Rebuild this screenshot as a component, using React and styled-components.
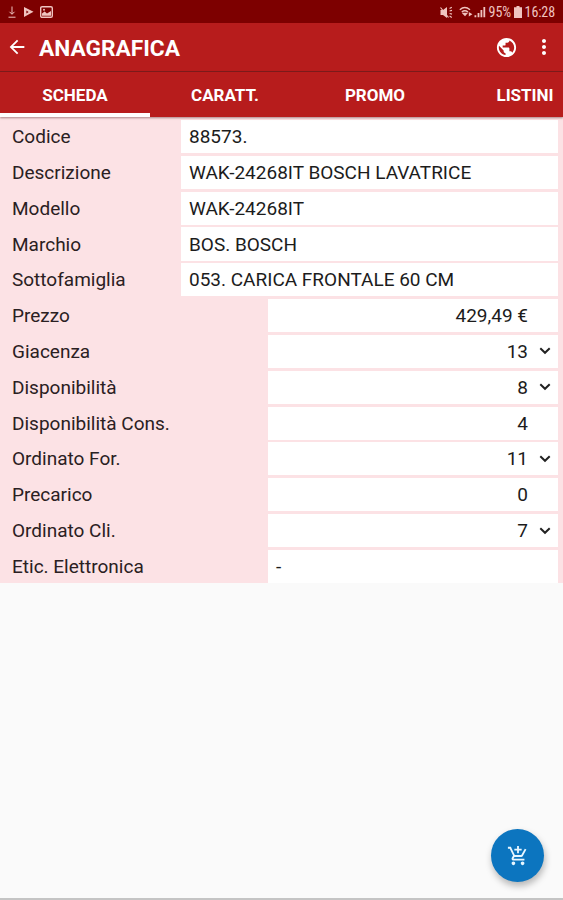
import { useState } from "react";
import styled, { createGlobalStyle } from "styled-components";
import {
  MdAddShoppingCart,
  MdArrowBack,
  MdMoreVert,
  MdPublic,
} from "react-icons/md";

const TABS = ["SCHEDA", "CARATT.", "PROMO", "LISTINI"];

const DETAILS = [
  { label: "Codice", value: "88573." },
  { label: "Descrizione", value: "WAK-24268IT BOSCH LAVATRICE" },
  { label: "Modello", value: "WAK-24268IT" },
  { label: "Marchio", value: "BOS. BOSCH" },
  { label: "Sottofamiglia", value: "053. CARICA FRONTALE 60 CM" },
];

const STOCK = [
  { label: "Prezzo", value: "429,49 €" },
  { label: "Giacenza", value: "13", more: true },
  { label: "Disponibilità", value: "8", more: true },
  { label: "Disponibilità Cons.", value: "4" },
  { label: "Ordinato For.", value: "11", more: true },
  { label: "Precarico", value: "0" },
  { label: "Ordinato Cli.", value: "7", more: true },
  { label: "Etic. Elettronica", value: "-", left: true },
];

function StatusIcons() {
  return (
    <StatusGroup>
      <svg width="10" height="13" viewBox="0 0 10 13" fill="none" stroke="currentColor">
        <path d="M5 0.5V8M2.5 5.8L5 8.3L7.5 5.8M1.5 11.2H8.5" />
      </svg>
      <svg width="11" height="12" viewBox="0 0 11 12" fill="currentColor">
        <path d="M1 1L10.5 5.8L1 11Z" />
        <path d="M3.4 4.6L5.6 6L3.4 7.4Z" fill="#7d0000" />
      </svg>
      <svg width="13" height="12" viewBox="0 0 13 12" fill="currentColor">
        <rect x="0.7" y="0.7" width="11.6" height="10.6" rx="1.4" fill="none" stroke="currentColor" strokeWidth="1.4" />
        <path d="M2 9.8V7.6L4.6 5.6L7 7.5L11 5V9.8Z" />
        <circle cx="4" cy="3.7" r="1" />
      </svg>
    </StatusGroup>
  );
}

function SignalIcons() {
  return (
    <>
      <svg width="14" height="13" viewBox="0 0 14 13" fill="currentColor">
        <path d="M0.5 4H3L7 1V12L3 9H0.5Z" />
        <path d="M0.5 1.5L8.5 11.5M9.6 2.5L11.8 1.2M9.6 5L12 4.4M9.6 7.5L12 8.2M9.6 10L11.8 11.4" stroke="currentColor" strokeWidth="1.2" />
      </svg>
      <svg className="wifi" width="14" height="12" viewBox="0 0 14 12" fill="none" stroke="currentColor" strokeWidth="1.4">
        <path d="M0.8 3.8Q5.8 -0.6 11 3.8M2.8 6Q5.8 3.4 9 6" />
        <path d="M4.3 7.4L6 9.2L7.6 7.4Z" fill="currentColor" />
        <path d="M9.8 6V10.6L13.4 8.3Z" fill="currentColor" stroke="none" />
      </svg>
      <svg width="12" height="12" viewBox="0 0 12 12" fill="currentColor">
        <path d="M0.5 9.2H2.3V11.2H0.5ZM3.6 7H5.4V11.2H3.6ZM6.5 4H8.3V11.2H6.5ZM9.4 1H11.2V11.2H9.4Z" />
      </svg>
    </>
  );
}

function App() {
  const [activeTab, setActiveTab] = useState("SCHEDA");

  return (
    <Page>
      <GlobalStyle />
      <StatusBar>
        <StatusIcons />
        <StatusInfo>
          <SignalIcons />
          <StatusText $width={24}>95%</StatusText>
          <Battery width="8" height="12" viewBox="0 0 8 12" fill="currentColor">
            <path d="M2.5 0H5.5V1.2H8V12H0V1.2H2.5Z" />
          </Battery>
          <StatusText>16:28</StatusText>
        </StatusInfo>
      </StatusBar>

      <AppBar>
        <IconButton aria-label="Indietro">
          <MdArrowBack size={22} />
        </IconButton>
        <Title>ANAGRAFICA</Title>
        <IconButton aria-label="Web">
          <MdPublic size={23} />
        </IconButton>
        <IconButton aria-label="Menu" $gap={14}>
          <MdMoreVert size={24} />
        </IconButton>
      </AppBar>

      <Tabs>
        {TABS.map((tab) => (
          <Tab
            key={tab}
            $active={tab === activeTab}
            onClick={() => setActiveTab(tab)}
          >
            {tab}
          </Tab>
        ))}
      </Tabs>

      <Sheet>
        {DETAILS.map(({ label, value }) => (
          <Row key={label} $label={181}>
            <Label>{label}</Label>
            <Value>{value}</Value>
          </Row>
        ))}
        {STOCK.map(({ label, value, more, left }) => (
          <Row key={label} $label={268}>
            <Label>{label}</Label>
            <Value $right={!left}>
              {value}
              {more && (
                <Chevron width="12" height="8" viewBox="0 0 12 8">
                  <path d="M1.3 1.3L6 5.8L10.7 1.3" />
                </Chevron>
              )}
            </Value>
          </Row>
        ))}
      </Sheet>

      <Footer>
        <CartButton aria-label="Aggiungi al carrello">
          <MdAddShoppingCart size={22} />
        </CartButton>
      </Footer>
    </Page>
  );
}

const GlobalStyle = createGlobalStyle`
  * {
    box-sizing: border-box;
  }
  body {
    margin: 0;
    font-family: Roboto, "Liberation Sans", sans-serif;
  }
  button {
    font-family: inherit;
    border: none;
    background: none;
    padding: 0;
    color: inherit;
  }
  svg {
    display: block;
    flex-shrink: 0;
  }
`;

const Page = styled.div`
  display: flex;
  flex-direction: column;
  width: 563px;
  height: 900px;
  overflow: hidden;
  background: #fafafa;
  border-bottom: 2px solid #c4c4c4;
`;

const StatusBar = styled.div`
  display: flex;
  align-items: center;
  justify-content: space-between;
  flex-shrink: 0;
  height: 23px;
  padding: 1px 8px 0 7px;
  background: #7d0000;
  color: #f0c4c0;
`;

const StatusGroup = styled.div`
  display: flex;
  align-items: center;
  gap: 6px;
`;

const StatusInfo = styled.div`
  display: flex;
  align-items: center;
  font-size: 14px;
  .wifi {
    margin: 0 1px 0 5px;
  }
`;

const StatusText = styled.span`
  width: ${({ $width }) => ($width ? `${$width}px` : "auto")};
  margin-left: 3px;
  line-height: 20px;
  font-stretch: 75%;
  letter-spacing: -0.1px;
  white-space: nowrap;
`;

const Battery = styled.svg`
  margin-left: 1px;
`;

const AppBar = styled.header`
  display: flex;
  align-items: center;
  flex-shrink: 0;
  height: 49px;
  padding: 0 7px 0 6px;
  background: #b71c1c;
  color: #fff;
  border-bottom: 1px solid #7e1a1a;
`;

const IconButton = styled.button`
  display: flex;
  margin-left: ${({ $gap }) => $gap || 0}px;
`;

const Title = styled.h1`
  flex: 1;
  margin: 0 0 0 11px;
  padding-top: 3px;
  font-size: 22.7px;
  font-weight: 700;
  line-height: 45px;
`;

const Tabs = styled.nav`
  display: grid;
  grid-template-columns: repeat(4, 150px);
  flex-shrink: 0;
  height: 45px;
  background: #b71c1c;
  box-shadow: 0 1px 2px rgba(90, 40, 40, 0.5);
  z-index: 1;
`;

const Tab = styled.button`
  color: #fff;
  font-size: 17px;
  font-weight: 700;
  padding-top: 4px;
  border-bottom: 4px solid ${({ $active }) => ($active ? "#fff" : "transparent")};
`;

const Sheet = styled.div`
  flex-shrink: 0;
  padding: 2px 5px 0 0;
  background: #fce2e5;
`;

const Row = styled.div`
  display: grid;
  grid-template-columns: ${({ $label }) => $label}px 1fr;
  height: 35.84px;
  padding: 1px 0 1.8px;
  &:last-child {
    height: 34px;
    padding-bottom: 0;
  }
`;

const Cell = styled.div`
  display: flex;
  align-items: center;
  font-size: 19px;
  line-height: 33px;
`;

const Label = styled(Cell)`
  padding-left: 12px;
  color: #2a2022;
`;

const Value = styled(Cell)`
  justify-content: ${({ $right }) => ($right ? "flex-end" : "flex-start")};
  padding: 0 ${({ $right }) => ($right ? 30 : 0)}px 0 8px;
  background: #fff;
  color: #1c1c1c;
`;

const Chevron = styled.svg`
  margin: 0 -23px 0 11px;
  fill: none;
  stroke: #222;
  stroke-width: 2;
`;

const Footer = styled.footer`
  display: flex;
  flex: 1;
  align-items: flex-end;
  justify-content: flex-end;
  padding: 0 19px 16px;
`;

const CartButton = styled.button`
  display: flex;
  align-items: center;
  justify-content: center;
  width: 53px;
  height: 53px;
  border-radius: 50%;
  background: #0c75bf;
  color: #e8f6ff;
  box-shadow: 1px 4px 7px rgba(0, 0, 0, 0.28);
`;

export default App;
